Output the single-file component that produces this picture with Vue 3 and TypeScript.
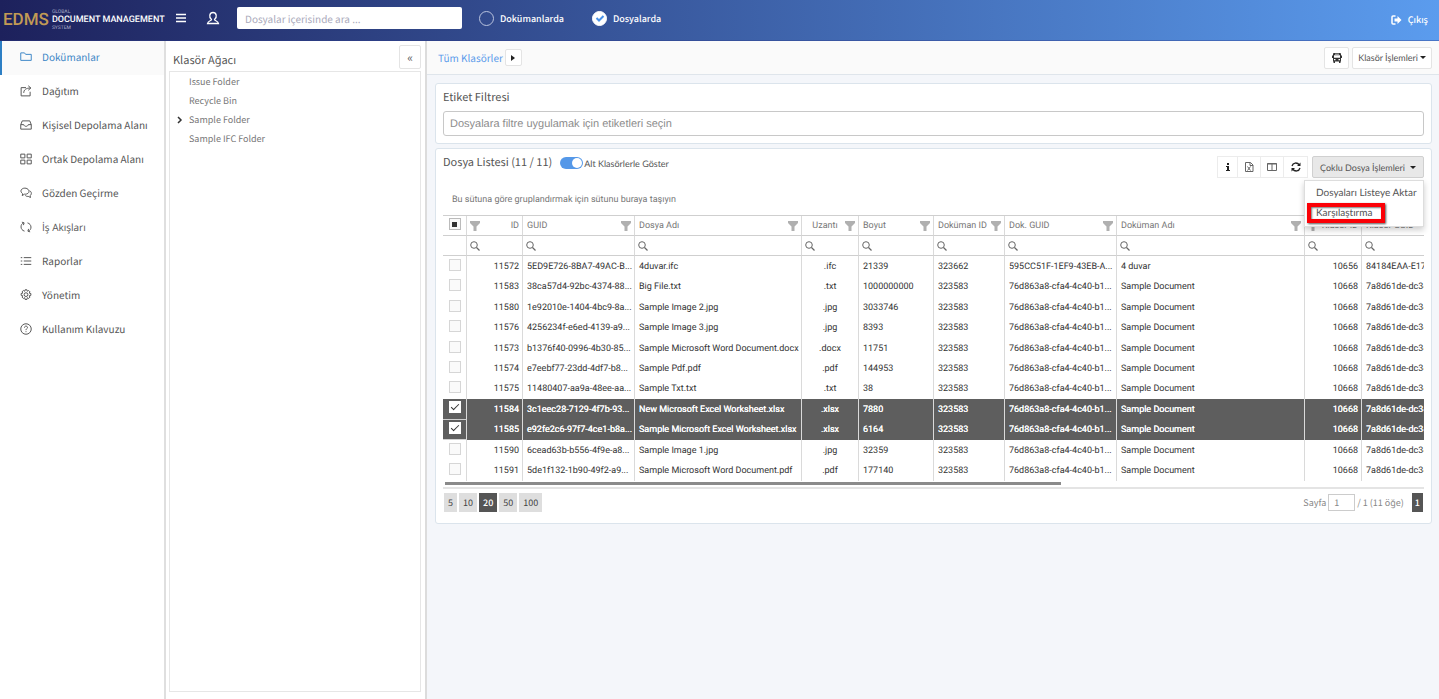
<script setup lang="ts">
import { ref } from 'vue'

interface NavItem { label: string; icon: string; alt?: boolean }
interface FileRow {
  id: string; guid: string; name: string; ext: string; size: string
  docId: string; docGuid: string; docName: string; folderId: string; folderGuid: string; selected: boolean
}

const navItems: NavItem[] = [
  { label: 'Dokümanlar', icon: 'M1 12.5V2.5h5l1.5 2H15v8z' },
  { label: 'Dağıtım', icon: 'M8 3.500H1.500v11h12V9M5 10.500c0-4 3-6.500 9-6.500M11 1l3.500 3-3.500 3' },
  { label: 'Kişisel Depolama Alanı', icon: 'M1 7.500l2-5h10l2 5v6H1zM1 7.500h4c.5 3 5.500 3 6 0h4' },
  { label: 'Ortak Depolama Alanı', icon: 'M1 1.500h5.500v5H1zM9.500 1.500H15v5H9.500zM1 9.500h5.500v5H1zM9.500 9.500H15v5H9.500z' },
  { label: 'Gözden Geçirme', icon: 'M3 11.500l.5-2.500C-1 5.500 2 1.500 6.500 1.500S14 6 10.500 8.500C8.500 10 6 9.500 6 9.500zM13 5c3 2 2.500 5 .5 6.500l.5 2.500-3-1.500c-2 .3-3.500-.5-4-1.500' },
  { label: 'İş Akışları', alt: true, icon: 'M6 13.500C0 12 0 4 5 2.500M2.500 1.500L5.500 2.500 4.500 5.500M10 2.500C16 4 16 12 11 13.500M13.500 14.500L10.500 13.500 11.500 10.500' },
  { label: 'Raporlar', icon: 'M1 3.500h2M5 3.500h10M1 8h2M5 8h10M1 12.500h2M5 12.500h10' },
  { label: 'Yönetim', icon: 'M6.800 1h2.400l.5 2 1.800-1 1.800 1.800-1 1.700 2.200.6v2.300l-2.200.6 1 1.800-1.800 1.800-1.800-1-.5 2.400H6.800l-.5-2.400-1.800 1-1.800-1.800 1-1.800-2.200-.6V6.100l2.200-.6-1-1.700L4.500 2l1.800 1zM8 5a2.500 2.500 0 1 0 0 5a2.500 2.500 0 1 0 0-5z' },
  { label: 'Kullanım Kılavuzu', icon: 'M8 1a7 7 0 1 0 0 14A7 7 0 1 0 8 1zM6 6.200c0-3 4.200-2.500 4 0C9.900 7.500 8 7.600 8 9.500M8 11v1.200' },
]

const folders = [
  { name: 'Issue Folder', expandable: false },
  { name: 'Recycle Bin', expandable: false },
  { name: 'Sample Folder', expandable: true },
  { name: 'Sample IFC Folder', expandable: false },
]

const columns = [
  { key: 'id', label: 'ID', align: 'right' },
  { key: 'guid', label: 'GUID', align: 'left' },
  { key: 'name', label: 'Dosya Adı', align: 'left' },
  { key: 'ext', label: 'Uzantı', align: 'center' },
  { key: 'size', label: 'Boyut', align: 'left' },
  { key: 'docId', label: 'Doküman ID', align: 'left' },
  { key: 'docGuid', label: 'Dok. GUID', align: 'left' },
  { key: 'docName', label: 'Doküman Adı', align: 'left' },
  { key: 'folderId', label: 'Klasör ID', align: 'right' },
  { key: 'folderGuid', label: 'Klasör GUID', align: 'left' },
] as const

const sampleRow = (id: string, guid: string, name: string, ext: string, size: string, selected = false): FileRow => ({
  id, guid, name, ext, size, selected,
  docId: '323583',
  docGuid: '76d863a8-cfa4-4c40-b1...',
  docName: 'Sample Document',
  folderId: '10668',
  folderGuid: '7a8d61de-dc34',
})

const rows = ref<FileRow[]>([
  {
    id: '11572', guid: '5ED9E726-8BA7-49AC-B...', name: '4duvar.ifc', ext: '.ifc', size: '21339', selected: false,
    docId: '323662', docGuid: '595CC51F-1EF9-43EB-A...', docName: '4 duvar', folderId: '10656', folderGuid: '84184EAA-E17',
  },
  sampleRow('11583', '38ca57d4-92bc-4374-88...', 'Big File.txt', '.txt', '1000000000'),
  sampleRow('11580', '1e92010e-1404-4bc9-8a...', 'Sample Image 2.jpg', '.jpg', '3033746'),
  sampleRow('11576', '4256234f-e6ed-4139-a9...', 'Sample Image 3.jpg', '.jpg', '8393'),
  sampleRow('11573', 'b1376f40-0996-4b30-85...', 'Sample Microsoft Word Document.docx', '.docx', '11751'),
  sampleRow('11574', 'e7eebf77-23dd-4df7-b8...', 'Sample Pdf.pdf', '.pdf', '144953'),
  sampleRow('11575', '11480407-aa9a-48ee-aa...', 'Sample Txt.txt', '.txt', '38'),
  sampleRow('11584', '3c1eec28-7129-4f7b-93...', 'New Microsoft Excel Worksheet.xlsx', '.xlsx', '7880', true),
  sampleRow('11585', 'e92fe2c6-97f7-4ce1-b8a...', 'Sample Microsoft Excel Worksheet.xlsx', '.xlsx', '6164', true),
  sampleRow('11590', '6cead63b-b556-4f9e-a8...', 'Sample Image 1.jpg', '.jpg', '32359'),
  sampleRow('11591', '5de1f132-1b90-49f2-a9...', 'Sample Microsoft Word Document.pdf', '.pdf', '177140'),
])

const pageSizes = [5, 10, 20, 50, 100]
const pageSize = ref(20)
const page = ref('1')
const scope = ref('files')
const withSubfolders = ref(true)
const search = ref('')
const tags = ref('')
</script>

<template>
  <div class="page">
    <header class="topbar">
      <div class="logo">
        <span class="logo-mark">EDMS</span>
        <span class="logo-text"><small>GLOBAL</small><b>DOCUMENT MANAGEMENT</b><small>SYSTEM</small></span>
      </div>
      <button class="bare" aria-label="Menü">
        <svg width="12" height="12" viewBox="0 0 12 12"><path d="M1 2.500h10M1 6h10M1 9.500h10" stroke="#fff" stroke-width="1.500" /></svg>
      </button>
      <button class="bare user" aria-label="Kullanıcı">
        <svg width="14" height="14" viewBox="0 0 14 14" fill="none" stroke="#fff" stroke-width="1.300"><path d="M5.500 8.500C2.500 6 3.500 1.500 7 1.500s4.500 4.500 1.500 7c0 1.500 3.500 1 4 4h-11c.5-3 4-2.500 4-4z" /></svg>
      </button>
      <input v-model="search" class="search" type="text" aria-label="Ara" placeholder="Dosyalar içerisinde ara ...">
      <label class="scope"><input v-model="scope" type="radio" value="docs"><span class="dot" />Dokümanlarda</label>
      <label class="scope"><input v-model="scope" type="radio" value="files"><span class="dot"><svg width="10" height="10" viewBox="0 0 10 10"><path d="M1.500 5l2.500 2.500L8.500 3" fill="none" stroke="#4a92e8" stroke-width="2" /></svg></span>Dosyalarda</label>
      <a class="logout" href="#">
        <svg width="11" height="10" viewBox="0 0 11 10"><path d="M4.500 1H2Q1 1 1 2v6q0 1 1 1h2.500" fill="none" stroke="#fff" stroke-width="1.500" /><path d="M3.500 3.500h3V1l4 4-4 4V6.500h-3z" fill="#fff" /></svg>
        Çıkış
      </a>
    </header>

    <div class="body">
      <nav class="sidebar">
        <a v-for="(item, i) in navItems" :key="item.label" href="#" :class="{ active: i === 0, alt: item.alt }">
          <svg width="12" height="12" viewBox="0 0 16 16" fill="none" stroke="currentColor" stroke-width="1.300"><path :d="item.icon" /></svg>
          <span>{{ item.label }}</span>
        </a>
      </nav>

      <aside class="tree-panel">
        <div class="tree-head">
          <h2>Klasör Ağacı</h2>
          <button class="box collapse" aria-label="Daralt">«</button>
        </div>
        <ul class="tree">
          <li v-for="folder in folders" :key="folder.name">
            <svg v-if="folder.expandable" width="6" height="8" viewBox="0 0 6 8"><path d="M1 1l3 3-3 3" fill="none" stroke="#333" stroke-width="1.500" /></svg>
            <a href="#">{{ folder.name }}</a>
          </li>
        </ul>
      </aside>

      <main>
        <div class="crumbs">
          <a href="#">Tüm Klasörler</a>
          <button class="box crumb-next" aria-label="Alt klasörler"><svg width="4" height="6" viewBox="0 0 4 6"><path d="M0 0l4 3-4 3z" fill="#222" /></svg></button>
          <button class="box bus" aria-label="Aktarım">
            <svg width="10" height="10" viewBox="0 0 10 10"><path fill="#333" fill-rule="evenodd" d="M2 0h6q1 0 1 1v1.500h1V5H9v3.500h-.5V10H7V8.500H3V10H1.500V8.500H1V5H0V2.500h1V1q0-1 1-1zM3 .8v.7h4V.8zM2 2.300v2.500h6V2.300zM2 6v1.200h1.500V6zM6.500 6v1.200H8V6z" /></svg>
          </button>
          <button class="box folder-menu">Klasör İşlemleri<i class="caret" /></button>
        </div>

        <section class="card">
          <h2><label for="tags">Etiket Filtresi</label></h2>
          <input id="tags" v-model="tags" class="tags" type="text" placeholder="Dosyalara filtre uygulamak için etiketleri seçin">
        </section>

        <section class="card list">
          <div class="list-head">
            <h2>Dosya Listesi (11 / 11)</h2>
            <label class="switch"><input v-model="withSubfolders" type="checkbox"><span class="track" />Alt Klasörlerle Göster</label>
            <div class="tools">
              <button aria-label="Bilgi"><svg width="12" height="12" viewBox="0 0 12 12" fill="#222"><path d="M5 2h2v2H5zM4 5h3v4h1v1H4V9h1V6H4z" /></svg></button>
              <button aria-label="Excel"><svg width="12" height="12" viewBox="0 0 12 12" fill="none" stroke="#666"><path d="M2.500 1.500h5l2.500 2.500v6.500H2.500zM7 1.500v3h3M4.500 5.500l3 4M7.500 5.500l-3 4" /></svg></button>
              <button aria-label="Sütunlar"><svg width="12" height="12" viewBox="0 0 12 12" fill="none" stroke="#666"><path d="M1.500 2.500h9v7h-9zM6 2v8M1 3h10" /></svg></button>
              <button aria-label="Yenile"><svg width="12" height="12" viewBox="0 0 12 12" fill="none" stroke="#222" stroke-width="1.300"><path d="M2 5C3 1.500 7 1 9.500 4M10 7c-1 3.500-5 4-7.500 1" /><path d="M10.500 1.500v3.500H7zM1.500 10.500V7H5z" fill="#222" stroke="none" /></svg></button>
            </div>
            <div class="dropdown">
              <button class="box multi">Çoklu Dosya İşlemleri<i class="caret" /></button>
              <div class="menu">
                <a href="#">Dosyaları Listeye Aktar</a>
                <a href="#" class="marked">Karşılaştırma</a>
              </div>
            </div>
          </div>

          <p class="group-hint">Bu sütuna göre gruplandırmak için sütunu buraya taşıyın</p>

          <div class="grid">
            <table>
              <colgroup>
                <col class="w-check"><col class="w-id"><col class="w-guid"><col class="w-name"><col class="w-ext"><col class="w-size"><col class="w-doc"><col class="w-guid"><col><col class="w-folder"><col class="w-last">
              </colgroup>
              <thead>
                <tr>
                  <th class="check"><input class="mixed" type="checkbox" aria-label="Tümünü seç"></th>
                  <th v-for="col in columns" :key="col.key" :class="col.align">
                    <div class="head-cell">
                      <span>{{ col.label }}</span>
                      <svg v-if="col.key !== 'folderGuid'" width="10" height="10" viewBox="0 0 10 10"><path d="M0 0h10v2L6.500 5.500V10h-3V5.500L0 2z" fill="#b0b0b0" /></svg>
                    </div>
                  </th>
                </tr>
                <tr class="filters">
                  <td />
                  <td v-for="col in columns" :key="col.key">
                    <svg width="10" height="10" viewBox="0 0 10 10" fill="none" stroke="#666"><circle cx="4" cy="4" r="3.300" /><path d="M6.500 6.500L9.500 9.500" stroke-width="1.300" /></svg>
                  </td>
                </tr>
              </thead>
              <tbody>
                <tr v-for="row in rows" :key="row.id" :class="{ selected: row.selected }">
                  <td class="check"><input v-model="row.selected" type="checkbox" :aria-label="row.name"></td>
                  <td v-for="col in columns" :key="col.key" :class="col.align">{{ row[col.key] }}</td>
                </tr>
              </tbody>
            </table>
            <div class="scroll"><span /></div>
          </div>

          <footer class="pager">
            <button v-for="n in pageSizes" :key="n" :class="{ current: n === pageSize }" @click="pageSize = n">{{ n }}</button>
            <label class="goto">Sayfa <input v-model="page" type="text"> / 1 (11 öğe)</label>
            <button class="current number">1</button>
          </footer>
        </section>
      </main>
    </div>
  </div>
</template>

<style>
html, body, #app { height: 100%; }
body { margin: 0; }
</style>

<style scoped>
* { box-sizing: border-box; }
.page {
  min-height: 100vh;
  display: flex;
  flex-direction: column;
  font-family: "Noto Sans CJK JP", "Noto Sans", sans-serif;
  font-size: 10px;
  font-variant-ligatures: none;
  text-rendering: geometricPrecision;
  color: #555;
  background: #f4f6fa;
}
button, input { font: inherit; color: inherit; margin: 0; text-rendering: inherit; }
button { padding: 0; cursor: pointer; }
a { color: inherit; text-decoration: none; }
h2 { margin: 0; font-size: 11px; font-weight: 400; line-height: 18px; color: #555; }
svg { display: block; flex: none; }
.box {
  display: flex;
  align-items: center;
  justify-content: center;
  background: #fff;
  border: 1px solid #e4e4e4;
  border-radius: 2px;
}
.caret {
  border: 3px solid transparent;
  border-top-color: #222;
  border-bottom: 0;
  margin-left: 2px;
}
.folder-menu, .switch, .multi, .menu { font-family: Lato, "Open Sans", sans-serif; font-size: 9px; }

.topbar {
  display: flex;
  align-items: center;
  height: 41px;
  padding: 0 11px 4px 3px;
  background: linear-gradient(90deg, #1d215c, #5b9cee);
  border-bottom: 1px solid #2d3c8b66;
  color: #fff;
}
.logo { display: flex; align-items: center; gap: 3px; width: 172px; padding-top: 4px; font-family: Roboto, "Liberation Sans", sans-serif; }
.logo-mark { font-size: 17px; line-height: 24px; font-weight: 500; color: #c19a55; }
.logo-text { display: flex; flex-direction: column; white-space: nowrap; }
.logo-text b { font-size: 9px; line-height: 10px; font-weight: 500; }
.logo-text small { font-size: 5px; line-height: 6px; color: #a9abc6; }
.bare { background: none; border: 0; }
.user { margin-left: 19px; }
.search {
  width: 225px;
  height: 22px;
  margin: 0 17px 0 17px;
  padding: 0 8px;
  border: 0;
  border-radius: 2px;
  background: #fff;
  color: #555;
}
.search::placeholder { color: #aab; opacity: 1; }
.scope { display: flex; align-items: center; gap: 6px; margin-right: 28px; font-size: 9px; font-weight: 500; }
.scope input { position: absolute; opacity: 0; }
.dot { display: flex; align-items: center; justify-content: center; width: 15px; height: 15px; border: 1px solid #b9c3de; border-radius: 50%; }
.scope input:checked + .dot { background: #fff; border-color: #fff; }
.logout { display: flex; align-items: center; gap: 6px; margin-left: auto; padding-top: 3px; font-size: 9px; font-weight: 500; }

.body { flex: 1; display: flex; }
.sidebar {
  flex: none;
  align-self: stretch;
  width: 166px;
  border-right: 2px solid #dfdfdf;
  background: #fff;
}
.sidebar a { display: flex; align-items: center; gap: 10px; height: 34px; padding: 0 0 3px 20px; }
.sidebar a.active { padding-left: 18px; border-left: 2px solid #2d7fc4; background: #fafafa; color: #3d86c6; }
.sidebar .alt span { font-family: "Open Sans", "Noto Sans", sans-serif; }

.tree-panel { flex: none; width: 261px; display: flex; flex-direction: column; padding: 4px 4px 7px 3px; background: #fff; border-right: 2px solid #dcdcdc; }
.tree-head { display: flex; justify-content: space-between; height: 26px; padding-left: 4px; }
.tree-head h2 { padding-top: 6px; }
.collapse { width: 22px; height: 24px; font-size: 12px; }
.tree { flex: 1; margin: 0; padding: 0; list-style: none; border: 1px solid #e6e6e6; color: #777; font-size: 9px; }
.tree li { display: flex; align-items: center; height: 19px; padding-left: 19px; }
.tree li svg { margin: 0 6px 0 -12px; }

main { flex: 1; min-width: 0; }
.crumbs { display: flex; align-items: center; height: 34px; padding: 0 7px 0 11px; background: #fafafa; border-bottom: 1px solid #dfe5eb; }
.crumbs > a { color: #5b9bea; }
.crumb-next { width: 17px; height: 17px; margin-left: 2px; }
.bus { width: 25px; height: 22px; margin-left: auto; }
.folder-menu { height: 22px; margin-left: 3px; padding: 0 5px; }

.card { margin: 8px 7px 0 8px; padding: 4px 7px 7px; background: #fff; border: 1px solid #dbe4ec; border-radius: 3px; }
.tags {
  display: block;
  width: 100%;
  height: 25px;
  margin-top: 5px;
  padding: 0 6px;
  border: 1px solid #c8c8c8;
  border-radius: 3px;
  font-family: "Liberation Sans", Arial, sans-serif;
  font-size: 11px;
}
.tags::placeholder { color: #8d8d8d; opacity: 1; }
.list { margin-top: 4px; padding-bottom: 11px; }
.list-head { display: flex; align-items: flex-start; }
.switch { display: flex; align-items: center; gap: 1px; height: 20px; margin-left: 8px; }
.switch input { position: absolute; opacity: 0; }
.track { width: 23px; height: 12px; border-radius: 6px; background: #ccc; display: flex; padding: 1px; }
.track::after { content: ""; width: 10px; height: 10px; border-radius: 50%; background: #fff; }
.switch input:checked + .track { background: #5598e8; justify-content: flex-end; }
.tools { display: flex; margin: 3px 4px 0 auto; border: 1px solid #ececec; }
.tools button { display: flex; align-items: center; justify-content: center; width: 23px; height: 20px; background: #fff; border: 0; border-right: 1px solid #ececec; }
.tools button:first-child { width: 20px; }
.tools button:last-child { border-right: 0; }
.dropdown { position: relative; margin-top: 3px; }
.multi { height: 22px; padding: 0 7px; background: #e8e8e8; border-color: #d0d0d0; }
.multi .caret { margin-left: 5px; }
.menu {
  position: absolute;
  z-index: 2;
  top: 24px;
  right: 0;
  width: 120px;
  padding: 3px 0;
  background: #fff;
  border: 1px solid #ddd;
  box-shadow: 0 3px 6px #0003;
  font-size: 10px;
}
.menu a { display: block; height: 19px; padding-left: 11px; line-height: 19px; white-space: nowrap; }
.menu .marked { width: 78px; margin-left: 2px; padding-left: 5px; height: 20px; line-height: 12px; border: 4px solid #fb0006; box-shadow: 1px 1px 2px #000a, inset 1px 1px 2px #0008; }

.group-hint { margin: 14px 9px 7px; line-height: 16px; font-family: Roboto, "Open Sans", sans-serif; font-size: 9px; color: #777; }
.grid { overflow: hidden; }
table { width: 100%; height: 266px; table-layout: fixed; border-collapse: separate; border-spacing: 0; border-top: 1px solid #cfcfcf; font-family: Roboto, "Open Sans", sans-serif; font-size: 9px; color: #333; }
.w-check { width: 24px; }
.w-id { width: 56px; }
.w-guid { width: 112px; }
.w-name { width: 167px; }
.w-ext { width: 57px; }
.w-size { width: 75px; }
.w-doc { width: 71px; }
.w-folder { width: 57px; }
.w-last { width: 62px; }
th, td { padding: 1px 3px 0; line-height: 18px; font-weight: 400; text-align: left; white-space: nowrap; overflow: hidden; border-right: 1px solid #dadada; }
th:last-child, td:last-child { border-right: 0; padding-right: 0; }
thead tr { height: 20px; }
thead th, thead td { border-bottom: 1px solid #cfcfcf; color: #777; }
.left { padding-left: 4px; }
.right { text-align: right; }
.center { text-align: center; }
.head-cell { display: flex; align-items: center; justify-content: space-between; }
.right .head-cell { flex-direction: row-reverse; }
.center .head-cell span { flex: 1; }
.check { padding: 0; text-align: center; line-height: 0; }
.check input {
  appearance: none;
  width: 12px;
  height: 12px;
  border: 1px solid #d6d6d6;
  background: #fafafa;
  display: inline-grid;
  place-items: center;
  margin-bottom: 3px;
}
.check input:checked { background: #fff; border-color: #fff; }
.check input:checked::after { content: ""; width: 7px; height: 3px; border: solid #333; border-width: 0 0 1px 1px; transform: translateY(-1px) rotate(-45deg); }
.check .mixed { border-color: #bbb; }
.check .mixed::after { content: ""; width: 5px; height: 5px; background: #333; }
.selected td { background: #5e5e5e; color: #fff; text-shadow: 0 0 0 #fff; }
.selected .check { border-bottom: 1px solid #d0d0d0; }
.scroll { height: 8px; padding: 1px 2px 0; border-bottom: 2px solid #e4e4e4; }
.scroll span { display: block; width: 63%; height: 3px; background: #8a8a8a; }

.pager { display: flex; align-items: center; gap: 2px; margin-top: 4px; padding: 0 1px; font-size: 9px; color: #888; }
.pager button { height: 19px; padding: 0 4px; border: 0; background: #dedede; color: #444; }
.pager .current { background: #555; color: #fff; font-weight: 500; }
.goto { display: flex; align-items: center; gap: 2px; margin-left: auto; }
.goto input { width: 27px; height: 17px; padding: 0 5px; border: 1px solid #ccc; background: #fff; }
.pager .number { margin-left: 6px; padding: 0 3px; }
</style>
